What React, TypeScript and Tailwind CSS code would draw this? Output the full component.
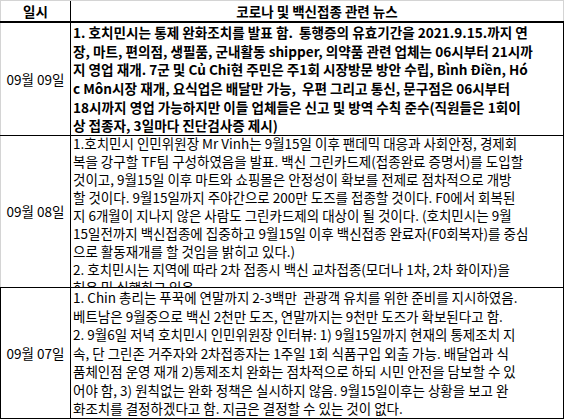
const font = { fontFamily: '"Noto Sans CJK KR", "Noto Sans", sans-serif' }

type Row = {
   date: string
   height: string
   leftBorder: string
   textClass: string
   lines: string[]
}

const rows: Row[] = [
   {
      date: "09월 09일",
      height: "h-[112px]",
      leftBorder: "border-l-[#d4d4d4]",
      textClass: "justify-center font-bold text-[13.6px] leading-[18.6px]",
      lines: [
         "1. 호치민시는 통제 완화조치를 발표 함.  통행증의 유효기간을 2021.9.15.까지 연",
         "장, 마트, 편의점, 생필품, 군내활동 shipper, 의약품 관련 업체는 06시부터 21시까",
         "지 영업 재개. 7군 및 Củ Chi현 주민은 주1회 시장방문 방안 수립, Bình Điền, Hó",
         "c Môn시장 재개, 요식업은 배달만 가능,  우편 그리고 통신, 문구점은 06시부터",
         "18시까지 영업 가능하지만 이들 업체들은 신고 및 방역 수칙 준수(직원들은 1회이",
         "상 접종자, 3일마다 진단검사증 제시)",
      ],
   },
   {
      date: "09월 08일",
      height: "h-[151px]",
      leftBorder: "border-l-[#d4d4d4]",
      textClass: "justify-start pt-0 text-[13.5px] leading-[18px] [&>div:first-child]:-mt-[2px]",
      lines: [
         "1.호치민시 인민위원장 Mr Vinh는 9월15일 이후 팬데믹 대응과 사회안정, 경제회",
         "복을 강구할 TF팀 구성하였음을 발표. 백신 그린카드제(접종완료 증명서)를 도입할",
         "것이고, 9월15일 이후 마트와 쇼핑몰은 안정성이 확보를 전제로 점차적으로 개방",
         "할 것이다. 9월15일까지 주야간으로 200만 도즈를 접종할 것이다. F0에서 회복된",
         "지 6개월이 지나지 않은 사람도 그린카드제의 대상이 될 것이다. (호치민시는 9월",
         "15일전까지 백신접종에 집중하고 9월15일 이후 백신접종 완료자(F0회복자)를 중심",
         "으로 활동재개를 할 것임을 밝히고 있다.)",
         "2. 호치민시는 지역에 따라 2차 접종시 백신 교차접종(모더나 1차, 2차 화이자)을",
         "허용 및 실행하고 있음.",
      ],
   },
   {
      date: "09월 07일",
      height: "h-[130px]",
      leftBorder: "border-l-black",
      textClass: "justify-center text-[13.5px] leading-[18.5px]",
      lines: [
         "1. Chin 총리는 푸꾹에 연말까지 2-3백만  관광객 유치를 위한 준비를 지시하였음.",
         "베트남은 9월중으로 백신 2천만 도즈, 연말까지는 9천만 도즈가 확보된다고 함.",
         "2. 9월6일 저녁 호치민시 인민위원장 인터뷰: 1) 9월15일까지 현재의 통제조치 지",
         "속, 단 그린존 거주자와 2차접종자는 1주일 1회 식품구입 외출 가능. 배달업과 식",
         "품체인점 운영 재개 2)통제조치 완화는 점차적으로 하되 시민 안전을 담보할 수 있",
         "어야 함, 3) 원칙없는 완화 정책은 실시하지 않음. 9월15일이후는 상황을 보고 완",
         "화조치를 결정하겠다고 함. 지금은 결정할 수 있는 것이 없다.",
      ],
   },
]

export default function App() {
   return (
      <div className="h-[419px] w-[564px] overflow-hidden bg-white text-black" style={font}>
         {/* header */}
         <div className="flex h-[23px] border-t border-b-2 border-t-[#d4d4d4] border-b-black">
            <div className="flex w-[71px] items-center justify-center border-r border-l border-l-[#d4d4d4] border-r-black text-[13.5px] font-bold">
               일시
            </div>
            <div className="flex flex-1 items-center justify-center border-r border-r-[#d4d4d4] text-[13.5px] font-bold">
               코로나 및 백신접종 관련 뉴스
            </div>
         </div>

         {rows.map((row) => (
            <div key={row.date} className="flex border-b border-black">
               <div
                  className={`flex w-[71px] shrink-0 items-center justify-center border-r border-l border-r-black ${row.leftBorder} ${row.height} text-[13.5px]`}
               >
                  {row.date}
               </div>
               <div
                  className={`flex flex-1 flex-col overflow-hidden border-r border-r-black pl-[2px] ${row.height} ${row.textClass}`}
               >
                  {row.lines.map((line, i) => (
                     <div key={i} className="shrink-0 whitespace-pre">
                        {line}
                     </div>
                  ))}
               </div>
            </div>
         ))}
      </div>
   )
}
